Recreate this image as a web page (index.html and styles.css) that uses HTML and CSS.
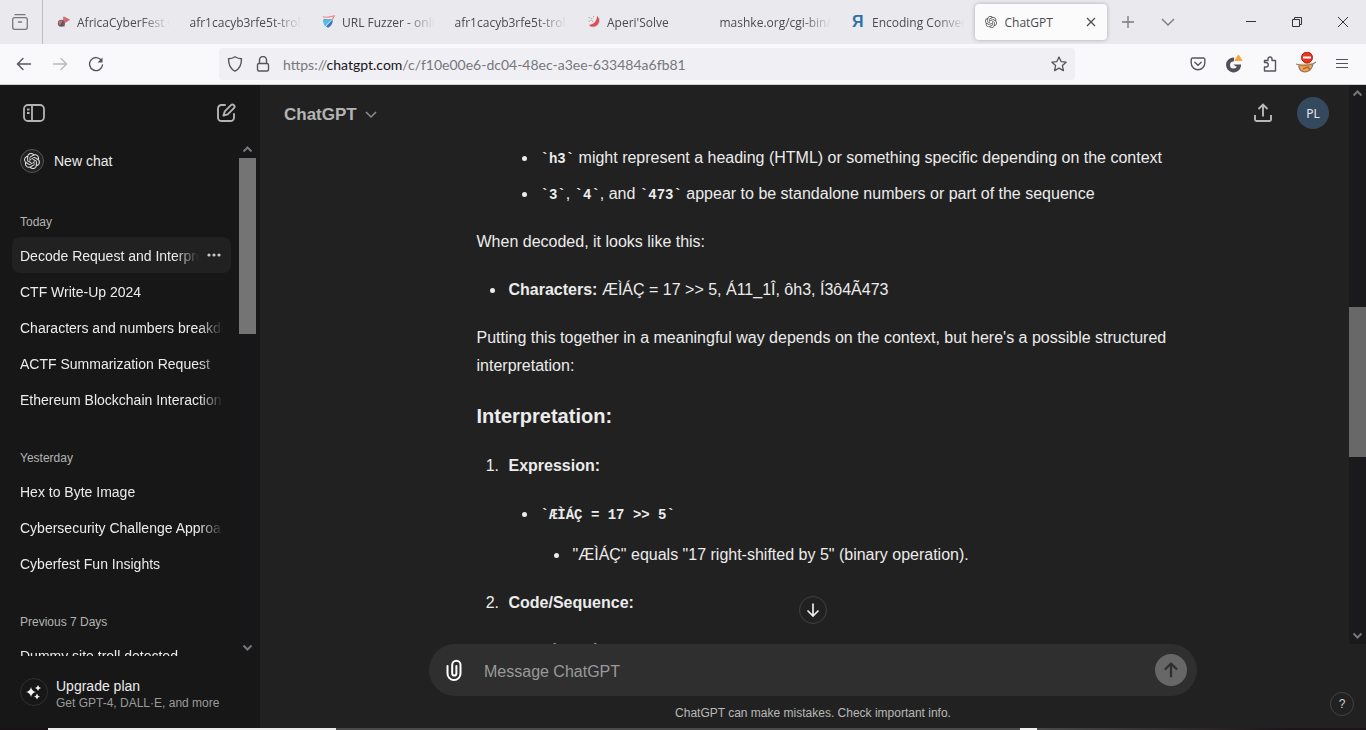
FILE: index.html
```html
<!DOCTYPE html>
<html lang="en">
<head>
<meta charset="utf-8">
<title>ChatGPT</title>
<link rel="stylesheet" href="styles.css">
</head>
<body>
<svg class="defs" aria-hidden="true">
  <symbol id="logo" viewBox="0 0 24 24"><path fill="currentColor" d="M22.2819 9.8211a5.9847 5.9847 0 0 0-.5157-4.9108 6.0462 6.0462 0 0 0-6.5098-2.9A6.0651 6.0651 0 0 0 4.9807 4.1818a5.9847 5.9847 0 0 0-3.9977 2.9 6.0462 6.0462 0 0 0 .7427 7.0966 5.98 5.98 0 0 0 .511 4.9107 6.051 6.051 0 0 0 6.5146 2.9001A5.9847 5.9847 0 0 0 13.2599 24a6.0557 6.0557 0 0 0 5.7718-4.2058 5.9894 5.9894 0 0 0 3.9977-2.9001 6.0557 6.0557 0 0 0-.7475-7.0729zm-9.022 12.6081a4.4755 4.4755 0 0 1-2.8764-1.0408l.1419-.0804 4.7783-2.7582a.7948.7948 0 0 0 .3927-.6813v-6.7369l2.02 1.1686a.071.071 0 0 1 .038.052v5.5826a4.504 4.504 0 0 1-4.4945 4.4944zm-9.6607-4.1254a4.4708 4.4708 0 0 1-.5346-3.0137l.142.0852 4.783 2.7582a.7712.7712 0 0 0 .7806 0l5.8428-3.3685v2.3324a.0804.0804 0 0 1-.0332.0615L9.74 19.9502a4.4992 4.4992 0 0 1-6.1408-1.6464zM2.3408 7.8956a4.485 4.485 0 0 1 2.3655-1.9728V11.6a.7664.7664 0 0 0 .3879.6765l5.8144 3.3543-2.0201 1.1685a.0757.0757 0 0 1-.071 0l-4.8303-2.7865A4.504 4.504 0 0 1 2.3408 7.872zm16.5963 3.8558L13.1038 8.364 15.1192 7.2a.0757.0757 0 0 1 .071 0l4.8303 2.7913a4.4944 4.4944 0 0 1-.6765 8.1042v-5.6772a.79.79 0 0 0-.407-.667zm2.0107-3.0231l-.142-.0852-4.7735-2.7818a.7759.7759 0 0 0-.7854 0L9.409 9.2297V6.8974a.0662.0662 0 0 1 .0284-.0615l4.8303-2.7866a4.4992 4.4992 0 0 1 6.6802 4.66zM8.3065 12.863l-2.02-1.1638a.0804.0804 0 0 1-.038-.0567V6.0742a4.4992 4.4992 0 0 1 7.3757-3.4537l-.142.0805L8.704 5.459a.7948.7948 0 0 0-.3927.6813zm1.0976-2.3654l2.602-1.4998 2.6069 1.4998v2.9994l-2.5974 1.4997-2.6067-1.4997Z"/></symbol>
  <symbol id="up" viewBox="0 0 17 17"><path d="M4.500 10.500l4-4 4 4" fill="none" stroke="#77777a" stroke-width="2"/></symbol>
  <symbol id="down" viewBox="0 0 17 17"><path d="M4.500 6.500l4 4 4-4" fill="none" stroke="#77777a" stroke-width="2"/></symbol>
</svg>
<div class="window">
  <header class="tabbar">
    <button class="recent" aria-label="Recent browsing"><svg width="18" height="18" viewBox="0 0 18 18" fill="none" stroke="#77777d" stroke-width="1.300" stroke-linecap="round"><path d="M4 1.700h10"/><rect x="1.700" y="4.700" width="14.600" height="11.600" rx="2"/><path d="M7.500 9h3"/></svg></button>
    <div class="tabs" role="tablist">
      <button class="tab" role="tab"><svg class="fav" viewBox="0 0 16 16"><circle cx="5" cy="9.500" r="4" fill="#55565c"/><path d="M1.500 9a3.500 3.500 0 0 1 5-2.500l-3 5.500z" fill="#d76b73"/><path d="M8 2v11" stroke="#8a6065" stroke-width="1.500"/><path d="M8.500 2l6.500 3.500-6 3.500z" fill="#da636c"/></svg><span class="tab-label">AfricaCyberFest C</span></button>
      <button class="tab" role="tab"><span class="tab-label">afr1cacyb3rfe5t-troll.c</span></button>
      <button class="tab" role="tab"><svg class="fav" viewBox="0 0 16 16"><path d="M2 4.500l5 .5 5-.5c1 4-1 8-5 10-4-2-6-6-5-10z" fill="#397cc5"/><path d="M2 5l5 .3 4-.3-7 8C2 11 1 8 2 5z" fill="#52bbe9"/><path d="M1 2c4 1.500 9 0 13-1l-2 4" fill="none" stroke="#ef8b83" stroke-width="1.300"/><path d="M11.500 5L4 13" stroke="#fff"/></svg><span class="tab-label">URL Fuzzer - onlin</span></button>
      <button class="tab" role="tab"><span class="tab-label">afr1cacyb3rfe5t-troll.c</span></button>
      <button class="tab" role="tab"><svg class="fav" viewBox="0 0 16 16"><path d="M11.500 1c5 4 2 14-6 12.500-1.500-.3-3-1.500-3-2.500C8 11 11 7 11.500 1z" fill="#dc4d59"/><path d="M13.800 3c2 5-1 11-8 11" fill="none" stroke="#c6cbc7"/><path d="M2 3h1M5 4h1M4 6h1M7 2h1M6 7h1M2 7h1" stroke="#777"/></svg><span class="tab-label">Aperi'Solve</span></button>
      <button class="tab" role="tab"><span class="tab-label">mashke.org/cgi-bin/c</span></button>
      <button class="tab" role="tab"><span class="fav ya">Я</span><span class="tab-label">Encoding Conver</span></button>
      <button class="tab active" role="tab" aria-selected="true"><svg class="fav gpt"><use href="#logo"/></svg><span class="tab-label">ChatGPT</span><svg width="12" height="12" viewBox="0 0 12 12" stroke="#4a4a50" stroke-width="1.200"><path d="M2 2l8 8M10 2l-8 8"/></svg></button>
    </div>
    <button class="tool" aria-label="New tab"><svg width="14" height="14" viewBox="0 0 14 14" stroke="#77777d" stroke-width="1.300"><path d="M7 1v12M1 7h12"/></svg></button>
    <button class="tool" aria-label="List all tabs"><svg width="14" height="14" viewBox="0 0 14 14" fill="none" stroke="#77777d" stroke-width="1.300"><path d="M1 4l6 6 6-6"/></svg></button>
    <div class="winctl">
      <button aria-label="Minimize"><svg width="12" height="12" viewBox="0 0 12 12" stroke="#333"><path d="M1 5.500h10"/></svg></button>
      <button aria-label="Restore"><svg width="12" height="12" viewBox="0 0 12 12" fill="none" stroke="#333"><path d="M1.500 3.500h7v7h-7zM3.500 3.500v-2h7v7h-2"/></svg></button>
      <button aria-label="Close"><svg width="12" height="12" viewBox="0 0 12 12" stroke="#333"><path d="M1 1l10 10M11 1L1 11"/></svg></button>
    </div>
  </header>
  <div class="toolbar">
    <div class="group">
      <button aria-label="Back"><svg width="16" height="16" viewBox="0 0 16 16" fill="none" stroke="#55555d" stroke-width="1.400" stroke-linecap="round"><path d="M1.500 8h13M7 2.500L1.500 8 7 13.500"/></svg></button>
      <button aria-label="Forward"><svg width="16" height="16" viewBox="0 0 16 16" fill="none" stroke="#b9b9be" stroke-width="1.400" stroke-linecap="round"><path d="M14.500 8h-13M9 2.500L14.500 8 9 13.500"/></svg></button>
      <button aria-label="Reload"><svg width="16" height="16" viewBox="0 0 16 16" fill="none" stroke="#55555d" stroke-width="1.400" stroke-linecap="round"><path d="M13.500 4.500A6.500 6.500 0 1 0 14.500 9"/><path d="M14.500 1.500v5h-5z" fill="#55555d" stroke="none"/></svg></button>
    </div>
    <div class="spacer"></div>
    <div class="urlbar">
      <svg width="16" height="16" viewBox="0 0 16 16" fill="none" stroke="#55555d" stroke-width="1.400"><path d="M8 .8c2 1.400 4.500 2 6.500 2 0 6-1.500 10-6.500 12.400C3 12.800 1.500 8.800 1.500 2.800c2 0 4.500-.6 6.500-2z" stroke-linejoin="round"/></svg>
      <svg width="16" height="16" viewBox="0 0 16 16" fill="none" stroke="#55555d" stroke-width="1.400"><rect x="2.500" y="7.500" width="11" height="7.500" rx="1.500"/><path d="M4.500 7.500V4a3.500 3.500 0 0 1 7 0v3.500"/></svg>
      <span class="url">https://<b>chatgpt.com</b>/c/f10e00e6-dc04-48ec-a3ee-633484a6fb81</span>
      <svg width="16" height="16" viewBox="0 0 16 16" fill="none" stroke="#55555d" stroke-width="1.300" stroke-linejoin="round"><path d="M8 1l2.100 4.600 5 .6-3.700 3.400 1 5L8 12.100l-4.400 2.500 1-5L.9 6.200l5-.6z"/></svg>
    </div>
    <div class="spacer"></div>
    <div class="group">
      <button aria-label="Pocket"><svg width="16" height="16" viewBox="0 0 16 16" fill="none" stroke="#55555d" stroke-width="1.400" stroke-linecap="round"><path d="M2.500 2h11a1.300 1.300 0 0 1 1.300 1.300V7a6.800 6.800 0 0 1-13.600 0V3.300A1.300 1.300 0 0 1 2.500 2z"/><path d="M4.800 6.200L8 9.200l3.200-3"/></svg></button>
      <button aria-label="Extension"><svg width="18" height="20" viewBox="0 0 18 20"><path d="M9 5.500A5.500 5.500 0 1 0 14 11.500" fill="none" stroke="#50505a" stroke-width="4"/><path d="M8.500 10.500H16v2H11z" fill="#50505a"/><path d="M13.500 1l3.500 5.500h-7z" fill="#ffa436" stroke="#ffa436" stroke-linejoin="round"/></svg></button>
      <button aria-label="Extensions"><svg width="16" height="16" viewBox="0 0 16 16" fill="none" stroke="#55555d" stroke-width="1.400" stroke-linejoin="round"><path d="M6 4.500V3a2 2 0 0 1 4 0v1.500h3.500V15h-11v-4H4a1.500 1.500 0 0 0 0-4.500H2.500v-2z"/></svg></button>
      <button aria-label="Proxy"><svg width="20" height="24" viewBox="0 0 20 24"><path d="M2 12l15-1c0 6-4 10-8 9.500-4 0-7-3-7-8.500z" fill="#f0a652"/><path d="M0 12l7 2 10-2 3-2M3 14c0 8 12 8 14-2" fill="none" stroke="#857d7b" stroke-width="1.200"/><path d="M7 17l5-2 2 3" fill="none" stroke="#c56325" stroke-width="1.500"/><circle cx="11" cy="5.500" r="5.500" fill="#e63522" stroke="#a92219"/><path d="M7 5.500h8" stroke="#fff" stroke-width="2"/></svg></button>
      <button aria-label="Menu"><svg width="14" height="14" viewBox="0 0 14 14" stroke="#55555d" stroke-width="1.200"><path d="M1 2.500h12M1 6.500h12M1 10.500h12"/></svg></button>
    </div>
  </div>
  <div class="app">
    <aside class="sidebar">
      <div class="side-head">
        <button aria-label="Close sidebar"><svg width="24" height="24" viewBox="0 0 24 24" fill="none" stroke="#b4b4b4" stroke-width="1.800"><rect x="2" y="4" width="20" height="16" rx="4"/><path d="M10 4v16M5 8.500h2.500M5 12h2.500"/></svg></button>
        <button aria-label="New chat"><svg width="22" height="22" viewBox="0 0 22 22" fill="none" stroke="#b4b4b4" stroke-width="1.900" stroke-linecap="round"><path d="M10 3H6.500A3.500 3.500 0 0 0 3 6.500v9A3.500 3.500 0 0 0 6.500 19h9a3.500 3.500 0 0 0 3.500-3.500V12"/><path d="M16 3.200a2 2 0 0 1 2.900 2.900l-6.200 6.200-4.200 1.300 1.300-4.200z" stroke-linejoin="round"/></svg></button>
      </div>
      <div class="side-scroll">
        <nav class="history">
          <a class="newchat" href="#"><span class="ring"><svg width="18" height="18"><use href="#logo"/></svg></span>New chat</a>
          <section>
            <h2>Today</h2>
            <div class="row current"><a href="#">Decode Request and Interpre</a><button aria-label="Options"><svg width="16" height="6" viewBox="0 0 16 6" fill="#c8c8c8"><circle cx="2" cy="2" r="1.600"/><circle cx="7" cy="2" r="1.600"/><circle cx="12" cy="2" r="1.600"/></svg></button></div>
            <div class="row"><a href="#">CTF Write-Up 2024</a></div>
            <div class="row"><a href="#">Characters and numbers breakdo</a></div>
            <div class="row"><a href="#">ACTF Summarization Request</a></div>
            <div class="row"><a href="#">Ethereum Blockchain Interaction</a></div>
          </section>
          <section>
            <h2>Yesterday</h2>
            <div class="row"><a href="#">Hex to Byte Image</a></div>
            <div class="row"><a href="#">Cybersecurity Challenge Approa</a></div>
            <div class="row"><a href="#">Cyberfest Fun Insights</a></div>
          </section>
          <section>
            <h2>Previous 7 Days</h2>
            <div class="row"><a href="#">Dummy site troll detected</a></div>
          </section>
        </nav>
        <div class="scrollbar"><svg><use href="#up"/></svg><div class="track"><div class="thumb side-thumb"></div></div><svg><use href="#down"/></svg></div>
      </div>
      <a class="upgrade" href="#">
        <span class="spark"><svg width="16" height="16" viewBox="0 0 16 16" fill="#f4f4f4"><path d="M5 3q.8 4.200 5 5-4.200.8-5 5-.8-4.200-5-5 4.200-.8 5-5zM12 1q.5 2.500 3 3-2.500.5-3 3-.5-2.500-3-3 2.500-.5 3-3zM11 9.500q.5 2.500 3 3-2.500.5-3 3-.5-2.500-3-3 2.500-.5 3-3z"/></svg></span>
        <span class="plan"><span>Upgrade plan</span><small>Get GPT-4, DALL·E, and more</small></span>
      </a>
    </aside>
    <main class="main">
      <div class="thread">
        <div class="thread-body">
          <header class="chat-head">
            <button class="model">ChatGPT<svg width="12" height="12" viewBox="0 0 12 12" fill="none" stroke="#8d8d8d" stroke-width="1.500"><path d="M1 3l5 5 5-5"/></svg></button>
            <div class="head-actions">
              <button aria-label="Share"><svg width="20" height="20" viewBox="0 0 20 20" fill="none" stroke="#b9b9b9" stroke-width="1.900"><path d="M10 13.500V2M5.500 6L10 1.500 14.500 6M2 12v4.500A1.500 1.500 0 0 0 3.500 18h13a1.500 1.500 0 0 0 1.500-1.500V12"/></svg></button>
              <button class="avatar">PL</button>
            </div>
          </header>
          <article class="message">
            <ul class="nested tight">
              <li><code>`h3`</code> might represent a heading (HTML) or something specific depending on the context</li>
              <li><code>`3`</code>, <code>`4`</code>, and <code>`473`</code> appear to be standalone numbers or part of the sequence</li>
            </ul>
            <p>When decoded, it looks like this:</p>
            <ul><li><strong>Characters:</strong> ÆÌÁÇ = 17 &gt;&gt; 5, Á11_1Î, ôh3, Í3ô4Ã473</li></ul>
            <p>Putting this together in a meaningful way depends on the context, but here's a possible structured interpretation:</p>
            <h3>Interpretation:</h3>
            <ol>
              <li><strong>Expression:</strong>
                <ul><li><code>`ÆÌÁÇ = 17 &gt;&gt; 5`</code>
                  <ul class="deep"><li>"ÆÌÁÇ" equals "17 right-shifted by 5" (binary operation).</li></ul></li></ul>
              </li>
              <li><strong>Code/Sequence:</strong>
                <ul><li><code>`Á11_1Î`</code></li></ul>
              </li>
            </ol>
          </article>
        </div>
        <div class="scrollbar"><svg><use href="#up"/></svg><div class="track main-track"><div class="thumb main-thumb"></div></div><svg><use href="#down"/></svg></div>
      </div>
      <div class="bottom">
        <button class="jump" aria-label="Scroll to bottom"><svg width="14" height="14" viewBox="0 0 14 14" fill="none" stroke="#ececec" stroke-width="1.700"><path d="M7 .5v12M1.500 7.500L7 13l5.500-5.500"/></svg></button>
        <form class="composer">
          <button type="button" aria-label="Attach files"><svg width="18" height="22" viewBox="0 0 18 22" fill="none" stroke="#fff" stroke-width="2" stroke-linecap="round"><path d="M2.500 7v7.500a6.500 6.500 0 0 0 13 0V6a4 4 0 0 0-8.300 0v8.500a2 2 0 0 0 4.200 0V7"/></svg></button>
          <input type="text" placeholder="Message ChatGPT" aria-label="Message ChatGPT">
          <button class="send" type="button" aria-label="Send"><svg width="16" height="16" viewBox="0 0 16 16" fill="none" stroke="#2f2f2f" stroke-width="2.200" stroke-linecap="round" stroke-linejoin="round"><path d="M8 14.500V2M2.500 7L8 1.500 13.500 7"/></svg></button>
        </form>
        <p class="note">ChatGPT can make mistakes. Check important info.</p>
        <button class="help">?</button>
      </div>
    </main>
  </div>
  <div class="taskbar"></div>
</div>
</body>
</html>
```
FILE: styles.css
```css
* { box-sizing: border-box; }
body { margin: 0; font-family: "Liberation Sans", Arial, sans-serif; color: #ececec; overflow: hidden; }
button { border: 0; padding: 0; background: none; color: inherit; font: inherit; display: flex; align-items: center; justify-content: center; }
a { color: inherit; text-decoration: none; }
p, h2, h3, ul, ol { margin: 0; padding: 0; }
svg { flex: none; }
.defs { display: none; }
.window { display: flex; flex-direction: column; height: 100vh; background: #212121; }

.tabbar { display: flex; align-items: stretch; height: 44px; flex: none; background: #eaeaee; color: #4a4a50; font: 12px "Open Sans", "Noto Sans", sans-serif; }
.recent { width: 43px; padding-right: 3px; border-right: 1px solid #bdbdc4; }
.tabs { display: flex; flex: 0 1 1065px; min-width: 0; padding-left: 3px; }
.tab { flex: 1 1 0; min-width: 0; gap: 6px; margin: 4px 1px; padding: 0 8px 0 10px; border-radius: 4px; text-align: left; }
.tab-label { flex: 1; min-width: 0; overflow: hidden; white-space: nowrap; mask-image: linear-gradient(to right, #000 calc(100% - 30px), transparent); }
.fav { width: 14px; height: 14px; flex: none; }
.ya { color: #2d70a8; font: bold 16px/14px "Liberation Sans", sans-serif; }
.gpt { width: 12px; height: 12px; color: #555; margin-right: 2px; }
.active { padding-right: 10px; background: #fbfbfb; box-shadow: 0 0 4px #a9a9b0; }
.active .tab-label { mask-image: none; }
.tool { width: 40px; }
.winctl { display: flex; margin-left: auto; }
.winctl button { width: 46px; }

.toolbar { display: flex; align-items: center; height: 41px; flex: none; padding: 0 6px; background: #f9f9fb; border-bottom: 1px solid #ccd2ce; }
.group { display: flex; }
.group button { width: 36px; height: 32px; }
.spacer { flex: 1; }
.urlbar { flex: 8; display: flex; align-items: center; gap: 12px; height: 32px; padding: 0 8px; border-radius: 4px; background: #f0f0f4; color: #77777c; font: 14px Lato, "Noto Sans", sans-serif; }
.url { flex: 1; }
.url b { font-weight: 400; color: #15141a; }

.app { display: flex; flex: 1; min-height: 0; }
.sidebar { display: flex; flex-direction: column; width: 260px; flex: none; background: #171717; font-size: 14px; }
.side-head { display: flex; align-items: center; justify-content: space-between; height: 56px; flex: none; padding: 0 23px 0 22px; }
.side-scroll { display: flex; flex: 1; min-height: 0; padding-right: 4px; }
.history { flex: 1; min-width: 0; overflow: hidden; display: flex; flex-direction: column; gap: 20px; padding: 0 8px 0 12px; }
.newchat { display: flex; align-items: center; gap: 10px; height: 40px; flex: none; padding: 0 8px; }
.ring { display: grid; place-items: center; width: 24px; height: 24px; border-radius: 50%; border: 1px solid #555; color: #e0e0e0; background: #222; }
.ring svg { width: 16px; height: 16px; }
.history h2 { height: 36px; padding: 11px 8px 0; font-size: 12px; line-height: 20px; font-weight: 400; color: #b4b4b4; }
.row { display: flex; align-items: center; gap: 8px; height: 36px; padding: 2px 8px 0; border-radius: 8px; }
.row a { flex: 1; min-width: 0; overflow: hidden; white-space: nowrap; line-height: 20px; mask-image: linear-gradient(to right, #000 calc(100% - 24px), transparent); }
.current { background: #212121; }
.upgrade { display: flex; align-items: center; gap: 8px; height: 72px; flex: none; padding: 0 20px; }
.spark { display: grid; place-items: center; width: 28px; height: 28px; border: 1px solid #303030; border-radius: 50%; }
.plan { display: flex; flex-direction: column; line-height: 18px; padding-top: 3px; }
.plan small { font-size: 12px; line-height: 16px; color: #9b9b9b; }

.scrollbar { width: 17px; flex: none; display: flex; flex-direction: column; background: #1a1a1c; }
.scrollbar svg { width: 17px; height: 17px; }
.side-scroll .scrollbar { background: #17171a; }
.track { flex: 1; }
.main-track { padding-top: 205px; display: flex; flex-direction: column; }
.thumb { background: #747474; }
.side-thumb { height: 176px; }
.main-thumb { height: 150px; background: #686868; }

.main { flex: 1; min-width: 0; display: flex; flex-direction: column; }
.thread { flex: 1; min-height: 0; display: flex; }
.thread-body { flex: 1; min-width: 0; overflow: hidden; }
.chat-head { display: flex; align-items: center; justify-content: space-between; height: 56px; padding: 0 20px 0 24px; }
.model { gap: 8px; padding-top: 3px; font-size: 17px; font-weight: 700; line-height: 28px; color: #b4b4b4; }
.head-actions { display: flex; align-items: center; gap: 24px; }
.avatar { width: 32px; height: 32px; border-radius: 50%; background: #34495e; color: #e5e9ed; font: 12px "Noto Sans", sans-serif; }
.message { display: flex; flex-direction: column; gap: 20px; max-width: 768px; margin: 0 auto; padding: 3px 0 0 56px; font-size: 16px; line-height: 28px; }
.message ul { padding-left: 29px; list-style: disc; }
.message ul > li { padding-left: 3px; }
.message ol { padding-left: 27px; }
.message ol > li { padding-left: 5px; }
.message li ul { margin: 20px 0; }
.message .nested { padding-left: 61px; }
.tight li + li { margin-top: 8px; }
.message li .deep { margin: 13px 0 0; }
.message h3 { font-size: 20px; line-height: 32px; }
.message code { font: bold 14px "Liberation Mono", monospace; }

.bottom { position: relative; flex: none; display: flex; flex-direction: column; padding: 0 169px; }
.jump { position: absolute; left: calc(50% - 14px); top: -48px; width: 28px; height: 28px; border: 1px solid #414141; border-radius: 50%; background: #212121; }
.composer { display: flex; align-items: center; gap: 21px; height: 52px; padding: 0 10px 0 16px; border-radius: 26px; background: #2f2f2f; }
.composer input { flex: 1; min-width: 0; padding: 4px 0 0; border: 0; outline: 0; background: none; color: #ececec; font: 16px "Liberation Sans", Arial, sans-serif; }
.composer input::placeholder { color: #9a9a9a; }
.send { width: 32px; height: 32px; border-radius: 50%; background: #676767; }
.note { height: 32px; line-height: 34px; text-align: center; font-size: 12px; color: #b9b9b9; }
.help { position: absolute; right: 12px; bottom: 12px; width: 24px; height: 24px; border: 1px solid #444; border-radius: 50%; font-size: 12px; color: #cfcfcf; }
.taskbar { height: 2px; flex: none; background: linear-gradient(to right, #1c1018 48px, #ececec 48px 336px, #4a4a4a 336px 1020px, #f0f0f0 1020px 1037px, #4a4a4a 1037px, #1c1418 1290px); }
```
